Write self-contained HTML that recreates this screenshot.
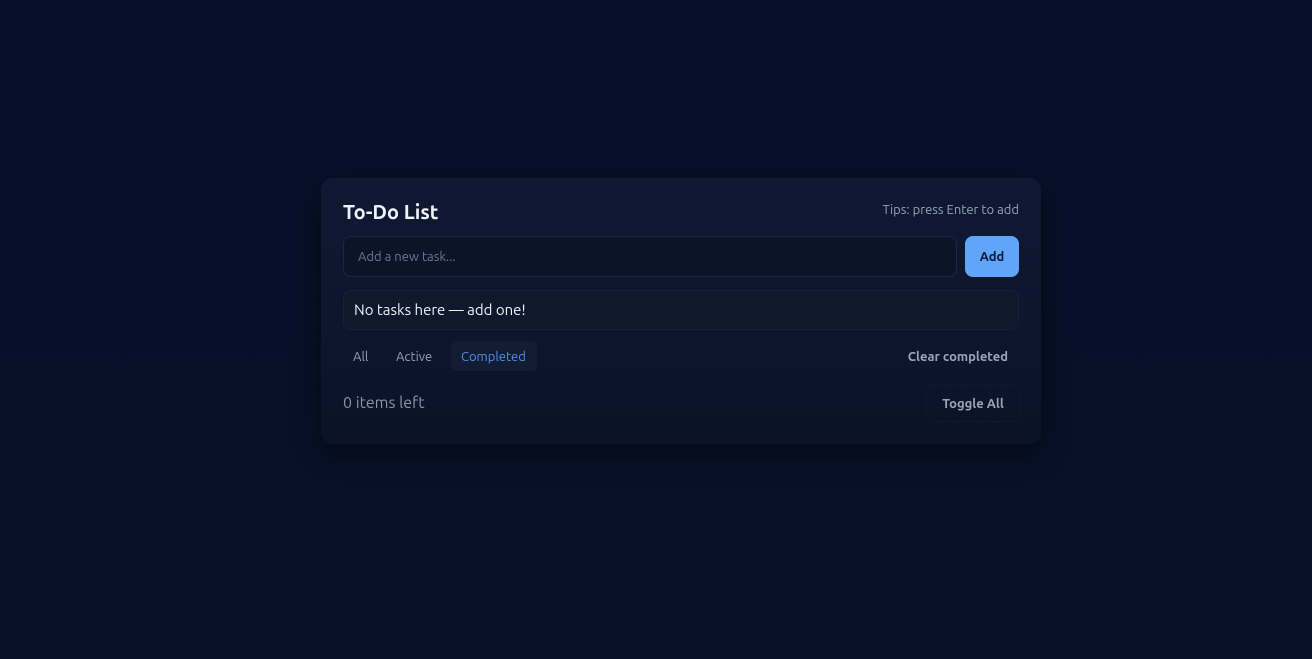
<!DOCTYPE html>
<html><head><style>
*{box-sizing:border-box;margin:0;padding:0}
body{width:1312px;height:659px;background:linear-gradient(180deg,#06102a,#071127);font-family:"Ubuntu","Liberation Sans",sans-serif;color:#e6ebf5;position:relative;overflow:hidden}
.card{position:absolute;left:321px;top:178px;width:720px;height:266px;border-radius:12px;background:linear-gradient(180deg,#0f1932,#0a1328);box-shadow:0 10px 30px rgba(0,0,0,.45)}
.a{position:absolute}
.title{left:22px;top:22px;font-size:20px;font-weight:bold;color:#eef2fa}
.tips{right:22px;top:25px;font-size:13px;color:#94a3b8}
.inp{left:22px;top:58px;width:614px;height:41px;border:1px solid #1c2840;border-radius:8px;background:#0b1429;font-size:13px;color:#6b7890;padding:13px 14px}
.add{left:644px;top:58px;width:54px;height:41px;border-radius:8px;background:#60a5fa;color:#0b1a33;font-size:13px;font-weight:bold;text-align:center;line-height:43px}
.empty{left:22px;top:112px;width:676px;height:40px;border:1px solid #162038;border-radius:8px;background:#0f192d;font-size:15px;color:#eef2fa;padding:10px 10px}
.f{top:163px;height:30px;line-height:32px;font-size:13px;color:#94a3b8;padding:0 10px;border-radius:6px}
.clear{right:33px;top:163px;line-height:32px;font-size:13px;font-weight:bold;color:#9aa6b8}
.left{left:22px;top:216px;font-size:16px;color:#8a96a8}
.tog{left:605px;top:207px;width:94px;height:37px;border:1px dashed #141d31;border-radius:8px;font-size:13px;font-weight:bold;color:#9aa6b8;text-align:center;line-height:36px}
</style></head><body>
<div class="card">
<div class="a title">To-Do List</div>
<div class="a tips">Tips: press Enter to add</div>
<div class="a inp">Add a new task...</div>
<div class="a add">Add</div>
<div class="a empty">No tasks here — add one!</div>
<div class="a f" style="left:22px">All</div>
<div class="a f" style="left:65px">Active</div>
<div class="a f" style="left:130px;width:86px;background:#121d33;color:#4f8fe6">Completed</div>
<div class="a clear">Clear completed</div>
<div class="a left">0 items left</div>
<div class="a tog">Toggle All</div>
</div>
</body></html>
